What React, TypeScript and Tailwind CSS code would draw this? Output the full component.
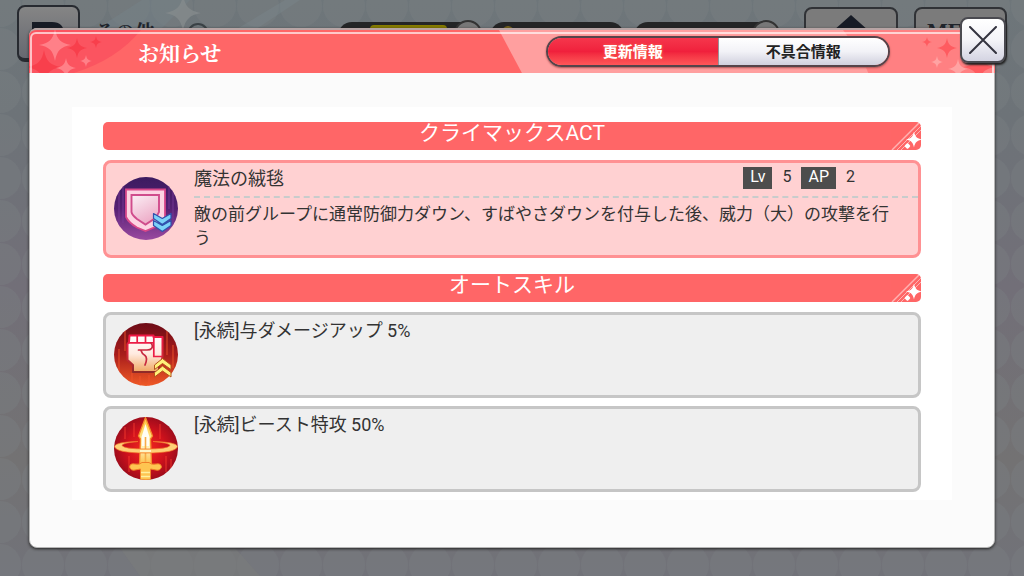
import type { ReactNode } from "react";

const SPARK = "M0 -1C.12 -.35 .35 -.12 1 0C.35 .12 .12 .35 0 1C-.12 .35 -.35 .12 -1 0C-.35 -.12 -.12 -.35 0 -1Z";

function Spark({ x, y, r, fill, o = 1 }: { x: number; y: number; r: number; fill: string; o?: number }) {
  return <path d={SPARK} fill={fill} opacity={o} transform={`translate(${x} ${y}) scale(${r})`} />;
}

function Wallpaper() {
  return (
    <svg className="absolute inset-0 h-full w-full" aria-hidden="true">
      <defs>
        <linearGradient id="sky" x1="0" y1="0" x2="0" y2="1">
          <stop offset="0" stopColor="#6e767a" />
          <stop offset=".2" stopColor="#6d7378" />
          <stop offset=".5" stopColor="#726f78" />
          <stop offset=".8" stopColor="#737273" />
          <stop offset="1" stopColor="#717279" />
        </linearGradient>
        <pattern id="scales" width="43" height="43" patternUnits="userSpaceOnUse">
          <circle cx="0" cy="6" r="21" fill="#7b8184" fillOpacity=".35" />
          <circle cx="43" cy="6" r="21" fill="#7b8184" fillOpacity=".35" />
          <circle cx="0" cy="49" r="21" fill="#7b8184" fillOpacity=".35" />
          <circle cx="43" cy="49" r="21" fill="#7b8184" fillOpacity=".35" />
        </pattern>
      </defs>
      <rect width="100%" height="100%" fill="url(#sky)" />
      <rect width="100%" height="100%" fill="url(#scales)" />
      <path d="M95 30L142 0H190L160 30Z" fill="#75838a" opacity=".45" />
      <path d="M235 30L285 0H300L255 30Z" fill="#7b878b" opacity=".4" />
      <path d="M120 548H235L260 576H140Z" fill="#7c7d7c" opacity=".5" />
      <Spark x={183} y={13} r={18} fill="#858b8c" o={0.8} />
    </svg>
  );
}

function PlusDisc() {
  return (
    <span className="-mt-0.5 -ml-6 flex size-7 items-center justify-center rounded-full border-2 border-[#333] bg-[#777] text-xl leading-5 text-[#222]">
      +
    </span>
  );
}

function GameBar() {
  return (
    <div aria-hidden="true" className="absolute inset-x-0 top-0 flex items-start px-[17px] font-bold text-[#20242b]">
      <div className="mt-[5px] flex h-[57px] w-[63px] justify-center rounded-lg border-2 border-b-4 border-[#272a30] bg-linear-to-b from-[#858585] to-[#666870] pt-3">
        <svg viewBox="0 0 34 30" className="h-[30px] w-[34px]">
          <path d="M0 3H20Q32 3 32 15V30H22V17Q22 13 17 13H0Z" fill="#171b25" />
        </svg>
      </div>
      <div className="mt-5 ml-[15px] font-['Noto_Serif_CJK_JP','Noto_Sans_CJK_JP',serif] text-xl leading-6">その他</div>
      <div className="mt-[23px] ml-8 size-[22px] rounded-full border-2 border-[#3a4145]" />
      <div className="mt-[22px] ml-auto flex items-start">
        <div className="flex h-7 w-[140px] rounded-2xl bg-[#242526] pt-[3px] pl-8">
          <div className="h-5 w-[77px] rounded-sm bg-[#857b00]" />
        </div>
        <PlusDisc />
        <div className="ml-2 flex h-7 w-[134px] rounded-2xl bg-[#242526] pt-1 pl-3">
          <div className="size-3 rounded-full bg-[#77641b]" />
        </div>
        <div className="ml-2.5 h-7 w-[142px] rounded-2xl bg-[#242526]" />
        <PlusDisc />
      </div>
      <div className="mt-[7px] ml-6 flex gap-4">
        <div className="flex h-[55px] w-[94px] justify-center rounded-lg border-2 border-b-4 border-[#303236] bg-[#7b7b7b] pt-1.5">
          <svg viewBox="0 0 40 30" className="h-[30px] w-10">
            <path d="M20 0L38 16H28V30H12V16H2Z" fill="#171b25" />
          </svg>
        </div>
        <div className="h-[55px] w-[93px] rounded-lg border-2 border-b-4 border-[#303236] bg-[#7b7b7b] pt-2 text-center font-['Liberation_Serif',serif] text-[22px] leading-7">
          MENU
        </div>
      </div>
    </div>
  );
}

function HeaderArt() {
  return (
    <>
      <svg viewBox="0 0 140 45" className="absolute top-0 left-0 h-[45px] w-[140px]" aria-hidden="true">
        <path d="M0 0H112Q86 32 38 45H0Z" fill="#f94f5e" opacity=".75" />
        <Spark x={26} y={15} r={16} fill="#ff8088" />
        <Spark x={48} y={18} r={10} fill="#f83f4c" />
        <Spark x={67} y={12} r={6} fill="#f83f4c" />
        <Spark x={15} y={37} r={17} fill="#f83f4c" />
        <Spark x={37} y={38} r={10} fill="#ff8088" />
        <Spark x={57} y={31} r={6} fill="#ff8088" />
      </svg>
      <svg viewBox="0 0 496 45" className="absolute top-0 right-0 h-[45px] w-[496px]" aria-hidden="true">
        <path d="M0 0H496V45H24Z" fill="#ff9f9f" />
        <path d="M344 0H496V45H370Q362 22 344 0Z" fill="#ff8082" />
        <Spark x={428} y={12} r={5} fill="#ff5b60" />
        <Spark x={448} y={18} r={10} fill="#ff5b60" />
        <Spark x={438} y={32} r={6} fill="#ffa3a3" />
        <Spark x={459} y={39} r={10} fill="#ffa3a3" />
        <Spark x={480} y={37} r={16} fill="#ff5b60" />
      </svg>
      <div className="absolute inset-x-px top-0.5 bottom-0 rounded-t-md border-x-2 border-t-2 border-white/65" />
    </>
  );
}

function SectionTitle({ children }: { children: ReactNode }) {
  return (
    <h2 className="relative overflow-hidden rounded-[5px] bg-[#ff6667] pb-1.5 text-center text-[21px] leading-[22px] text-white">
      {children}
      <svg viewBox="0 0 30 28" className="absolute top-0 right-0 h-7 w-[30px]" aria-hidden="true">
        <g stroke="#fff" opacity=".5">
          <path d="M1 28L29 0" strokeWidth="1.4" />
          <path d="M6 28L30 4M10 28L30 8" strokeWidth="1" />
        </g>
        <Spark x={23} y={17.5} r={8} fill="#fff" />
        <Spark x={23} y={17.5} r={6} fill="#fff" />
        <rect x="-2.2" y="-2.2" width="4.4" height="4.4" rx="1" fill="#fff" transform="translate(16.5 24) rotate(45)" />
      </svg>
    </h2>
  );
}

const iconClass = "h-[63px] w-16 shrink-0";

function ShieldIcon() {
  return (
    <svg viewBox="0 0 64 63" className={iconClass} aria-hidden="true">
      <defs>
        <linearGradient id="violet" x2="0" y2="1">
          <stop stopColor="#3c1b60" />
          <stop offset=".5" stopColor="#562073" />
          <stop offset="1" stopColor="#9a4aa0" />
        </linearGradient>
        <linearGradient id="plate" x2=".5" y2="1">
          <stop stopColor="#fbeff5" />
          <stop offset="1" stopColor="#edabc7" />
        </linearGradient>
        <clipPath id="disc">
          <ellipse cx="32" cy="31.5" rx="32" ry="31.5" />
        </clipPath>
      </defs>
      <g clipPath="url(#disc)">
        <rect width="64" height="63" fill="url(#violet)" />
        <path d="M5 12V50M9 4V46M55 6V32M59 12V48" stroke="#7d3c9a" strokeWidth="1.5" opacity=".5" />
      </g>
      <path d="M12 12.500H51V40Q47 47 40 50.500L31.500 54L23 50.500Q15 46 12 40Z" fill="#fdd3e2" stroke="#d8478a" strokeWidth="1.8" />
      <path d="M17.500 18H45V35Q44 38 40 42L31.500 47.500L23 42Q18 38 17.500 35Z" fill="url(#plate)" stroke="#d04c8c" strokeWidth="1.9" />
      <path d="M39.500 36.500L48.300 41.500L57 36.500V41.500L48.300 47.500L39.500 41.500ZM39.500 43.500L48.300 48.500L57 43.500V48.500L48.300 54.500L39.500 48.500Z" fill="#7cd2f8" stroke="#3052ae" strokeWidth="1.2" strokeLinejoin="round" />
    </svg>
  );
}

function FistIcon() {
  return (
    <svg viewBox="0 0 64 63" className={iconClass} aria-hidden="true">
      <defs>
        <linearGradient id="ember" x2="0" y2="1">
          <stop stopColor="#6d0c17" />
          <stop offset=".5" stopColor="#a81d1c" />
          <stop offset="1" stopColor="#ef5a26" />
        </linearGradient>
        <linearGradient id="skin" x2="0" y2="1">
          <stop stopColor="#fff" />
          <stop offset=".5" stopColor="#ffeae0" />
          <stop offset="1" stopColor="#f0a862" />
        </linearGradient>
        <linearGradient id="outline" x2="0" y2="1">
          <stop stopColor="#f01845" />
          <stop offset=".5" stopColor="#d8283c" />
          <stop offset="1" stopColor="#8f2a28" />
        </linearGradient>
      </defs>
      <g clipPath="url(#disc)">
        <rect width="64" height="63" fill="url(#ember)" />
        <path d="M5 26V50M11 6V28M18 50V63M26 53V63M35 52V63M53 5V32M59 22V45" stroke="#f0542c" strokeWidth="1.8" opacity=".5" />
      </g>
      <path d="M15.500 12.500H39.500V14H48.500V33Q48 39 45 41V49H19V42L13.500 37V21L15 19Z" fill="url(#skin)" stroke="url(#outline)" strokeWidth="2" strokeLinejoin="round" />
      <path d="M14.500 19.800H39.500M23.200 13V19.500M31.500 13V19.500M39.800 14V33.500H48" fill="none" stroke="#ec1d45" strokeWidth="1.7" />
      <path d="M37 20Q39.500 23 37.500 25.500Q36.500 27 33 27H24.500M27 27.500Q28 31 31 32.500Q34 35 31 42" fill="none" stroke="#c72a40" strokeWidth="1.7" strokeLinecap="round" />
      <path d="M40.500 42L48.500 35.500L57 42V46.500L48.500 40.500L40.500 46.500ZM40.500 49.500L48.500 43L57 49.500V54L48.500 48L40.500 54Z" fill="#fff27a" stroke="#b5521c" strokeWidth="1" strokeLinejoin="round" />
    </svg>
  );
}

function SwordIcon() {
  return (
    <svg viewBox="0 0 64 63" className={iconClass} aria-hidden="true">
      <defs>
        <radialGradient id="blaze" cx=".5" cy=".5" r=".55">
          <stop stopColor="#f52b20" />
          <stop offset=".55" stopColor="#cf121d" />
          <stop offset="1" stopColor="#930b1b" />
        </radialGradient>
        <linearGradient id="blade" x2="0" y2="1">
          <stop stopColor="#ffc83e" />
          <stop offset=".4" stopColor="#ffdf7c" />
          <stop offset=".65" stopColor="#fff1b8" />
          <stop offset="1" stopColor="#fdc04a" />
        </linearGradient>
      </defs>
      <g clipPath="url(#disc)">
        <rect width="64" height="63" fill="url(#blaze)" />
        <path d="M11 10V22M15 39V55M20 6V20M46 7V22M52 39V55M57 42V51" stroke="#ff4030" strokeWidth="1.5" opacity=".5" />
        <path d="M31.500 .5L38.500 19L36.500 22L37.500 47H25.500L26.500 22L24.500 19Z" fill="url(#blade)" stroke="#f58a2c" strokeWidth="1.3" />
        <path d="M31.500 7L35.500 20L35 29H28L27.500 20Z" fill="#fffdf4" />
        <path d="M31.500 20V46" stroke="#f7ad48" strokeWidth="1.6" />
        <path
          d="M24 24.500Q1 25 .5 29.500Q2 36 32 36Q62 36 63.500 29.500Q63 25 39 24.500Q56 26 56 28.500Q54 32 32 32Q10 32 8 28.500Q8 26 24 24.500Z"
          fill="#ffd077"
          stroke="#f4762c"
          strokeWidth=".7"
        />
        <path d="M26 34H37" stroke="#fff6c8" strokeWidth="2" />
        <path d="M15.500 50Q16 46 21 47Q26 48 28 45.500H35Q37 48 42 47Q47 46 47.500 50Q46 54 42 53L36.500 52V63H26.500V52L21 53Q17 54 15.500 50Z" fill="#fec551" stroke="#f08028" strokeWidth="1" />
        <path d="M27 55.500H36M27 59.500H36" stroke="#fff0a0" strokeWidth="1.5" />
      </g>
    </svg>
  );
}

function SkillCard({ icon, children }: { icon: ReactNode; children: ReactNode }) {
  return (
    <article className="flex min-h-[86px] gap-4 rounded-lg border-3 border-[#c6c6c6] bg-[#efefef] pt-2 pl-2">
      {icon}
      <p className="-mt-1 text-lg leading-6">{children}</p>
    </article>
  );
}

function Badge({ children }: { children: ReactNode }) {
  return <dt className="bg-[#4d4d4d] px-[7px] pb-0.5 leading-5 text-white">{children}</dt>;
}

export default function App() {
  return (
    <div className="relative flex min-h-screen flex-col overflow-hidden bg-[#6d7177] px-[29px] py-7 font-[Roboto,'Noto_Sans_CJK_JP',sans-serif] text-[#333]">
      <Wallpaper />
      <GameBar />
      <main className="relative rounded-lg border border-[#b5b5b5] bg-[#fbfbfb] shadow-[0_1px_3px_#222]">
        <header className="relative -m-px flex h-[45px] items-center justify-between overflow-hidden rounded-t-lg border-t-2 border-t-[#b8a5a5] bg-[#ff6667] pr-[105px] pl-[109px]">
          <HeaderArt />
          <h1 className="relative font-['Noto_Serif_CJK_JP','Noto_Sans_CJK_JP',serif] text-[21px] leading-6 font-bold text-white">
            お知らせ
          </h1>
          <nav className="relative flex h-[31px] w-[344px] overflow-hidden rounded-full border-2 border-[#55444a] text-[15px] font-bold shadow-[0_1px_2px_#a55]">
            <button
              type="button"
              aria-pressed="true"
              className="flex-1 bg-linear-to-b from-[#f5364c] via-[#f0203c] to-[#ff5558] pt-0.5 text-white text-shadow-[0_0_3px_#ff7050]"
            >
              更新情報
            </button>
            <button
              type="button"
              aria-pressed="false"
              className="flex-1 border-l border-[#99929a] bg-linear-to-b from-white via-[#f2f2f7] to-[#d0d0de] pt-0.5 text-[#222]"
            >
              不具合情報
            </button>
          </nav>
        </header>
        <div className="px-[42px] pt-[35px] pb-[47px]">
          <div className="bg-white px-[31px] pt-[15px] pb-2">
            <section>
              <SectionTitle>クライマックスACT</SectionTitle>
              <article className="mt-2.5 flex gap-4 rounded-lg border-3 border-[#ff9193] bg-[#ffd1d2] pt-[3px] pb-[5px] pl-2">
                <div className="pt-[11px]">
                  <ShieldIcon />
                </div>
                <div className="min-w-0 flex-1">
                  <div className="flex items-start justify-between border-b-2 border-dashed border-[#c8cccc] pb-1">
                    <h3 className="text-lg leading-[26px]">魔法の絨毯</h3>
                    <dl className="mr-[63px] flex gap-2.5 pt-px text-base leading-5">
                      <Badge>Lv</Badge>
                      <dd>5</dd>
                      <Badge>AP</Badge>
                      <dd>2</dd>
                    </dl>
                  </div>
                  <p className="pt-1 pr-4 text-[17px] leading-6">
                    敵の前グループに通常防御力ダウン、すばやさダウンを付与した後、威力（大）の攻撃を行う
                  </p>
                </div>
              </article>
            </section>
            <section className="mt-4">
              <SectionTitle>オートスキル</SectionTitle>
              <div className="mt-2.5 flex flex-col gap-2">
                <SkillCard icon={<FistIcon />}>[永続]与ダメージアップ 5%</SkillCard>
                <SkillCard icon={<SwordIcon />}>[永続]ビースト特攻 50%</SkillCard>
              </div>
            </section>
          </div>
        </div>
        <button
          type="button"
          aria-label="閉じる"
          className="absolute -top-3 -right-3 flex h-[46px] w-[46px] items-center justify-center rounded-lg border-2 border-[#4a4a50] bg-linear-to-b from-white via-[#f4f4f8] to-[#d4d4e2] shadow-[1px_2px_2px_#222]"
        >
          <svg viewBox="0 0 28 28" className="size-7" aria-hidden="true">
            <path d="M1 1L27 27M27 1L1 27" stroke="#34343f" strokeWidth="2" strokeLinecap="round" />
          </svg>
        </button>
      </main>
    </div>
  );
}
